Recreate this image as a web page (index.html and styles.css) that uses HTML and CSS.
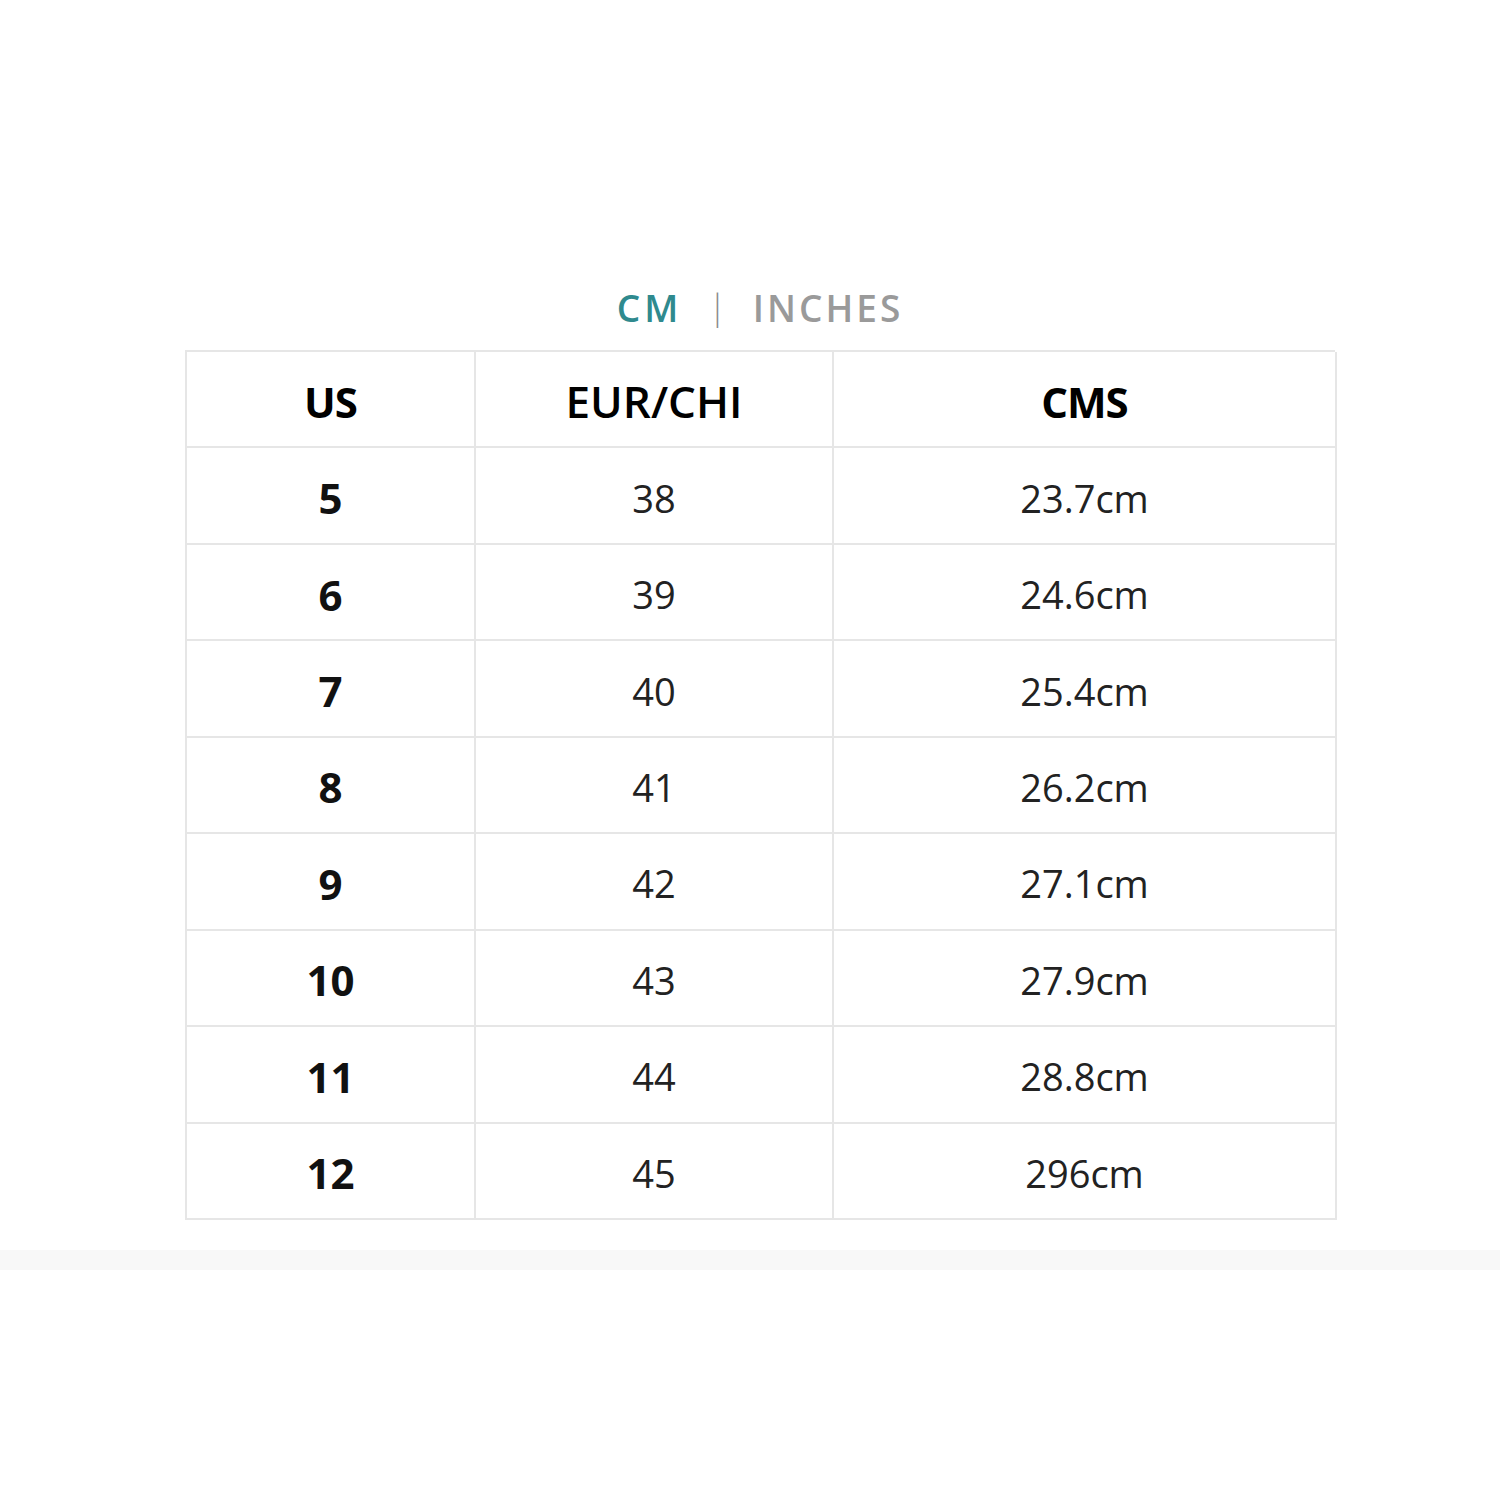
FILE: index.html
```html
<!DOCTYPE html>
<html>
<head>
<meta charset="utf-8">
<link rel="stylesheet" href="styles.css">
</head>
<body>
<div class="page">
  <div class="chart">
    <div class="units">
      <span class="unit active">CM</span>
      <span class="sep">|</span>
      <span class="unit">INCHES</span>
    </div>
    <div class="table">
      <div class="cell head">US</div>
      <div class="cell head wide">EUR/CHI</div>
      <div class="cell head">CMS</div>

      <div class="cell us">5</div><div class="cell">38</div><div class="cell">23.7cm</div>
      <div class="cell us">6</div><div class="cell">39</div><div class="cell">24.6cm</div>
      <div class="cell us">7</div><div class="cell">40</div><div class="cell">25.4cm</div>
      <div class="cell us">8</div><div class="cell">41</div><div class="cell">26.2cm</div>
      <div class="cell us">9</div><div class="cell">42</div><div class="cell">27.1cm</div>
      <div class="cell us">10</div><div class="cell">43</div><div class="cell">27.9cm</div>
      <div class="cell us">11</div><div class="cell">44</div><div class="cell">28.8cm</div>
      <div class="cell us">12</div><div class="cell">45</div><div class="cell">296cm</div>
    </div>
  </div>
  <div class="band"></div>
</div>
</body>
</html>
```

FILE: styles.css
```css
html, body {
  margin: 0;
  padding: 0;
  background: #ffffff;
}

.page {
  width: 1500px;
  height: 1500px;
  font-family: "Open Sans", "Noto Sans", sans-serif;
  padding-top: 282px;
  box-sizing: border-box;
}

.chart {
  width: 1150px;
  margin-left: 185px;
}

.units {
  display: flex;
  justify-content: center;
  align-items: center;
  gap: 26px;
  height: 50px;
  margin-bottom: 18px;
  font-size: 37px;
  font-weight: 600;
  letter-spacing: 3px;
}

.unit {
  color: #9a9a9a;
}

.unit.active {
  color: #2f8a8e;
  letter-spacing: 4px;
}

.sep {
  color: #8a8a8a;
  font-weight: 300;
  font-size: 34px;
  letter-spacing: 0;
}

.table {
  display: grid;
  grid-template-columns: 289px 358px 503px;
  grid-template-rows: repeat(9, 1fr);
  height: 870px;
  border-top: 2px solid #e6e6e6;
  border-left: 2px solid #e6e6e6;
  box-sizing: border-box;
}

.cell {
  display: flex;
  align-items: center;
  justify-content: center;
  border-right: 2px solid #e6e6e6;
  border-bottom: 2px solid #e6e6e6;
  font-size: 38px;
  color: #222222;
  padding-top: 4px;
}

.cell.head {
  font-weight: 700;
  color: #000000;
  font-size: 42px;
  letter-spacing: -1px;
}

.cell.head.wide {
  font-weight: 600;
  font-size: 44px;
  letter-spacing: 0;
}

.cell.us {
  font-weight: 700;
  color: #111111;
  font-size: 42px;
}

.band {
  margin-top: 30px;
  height: 20px;
  background: #f8f8f8;
}
```
